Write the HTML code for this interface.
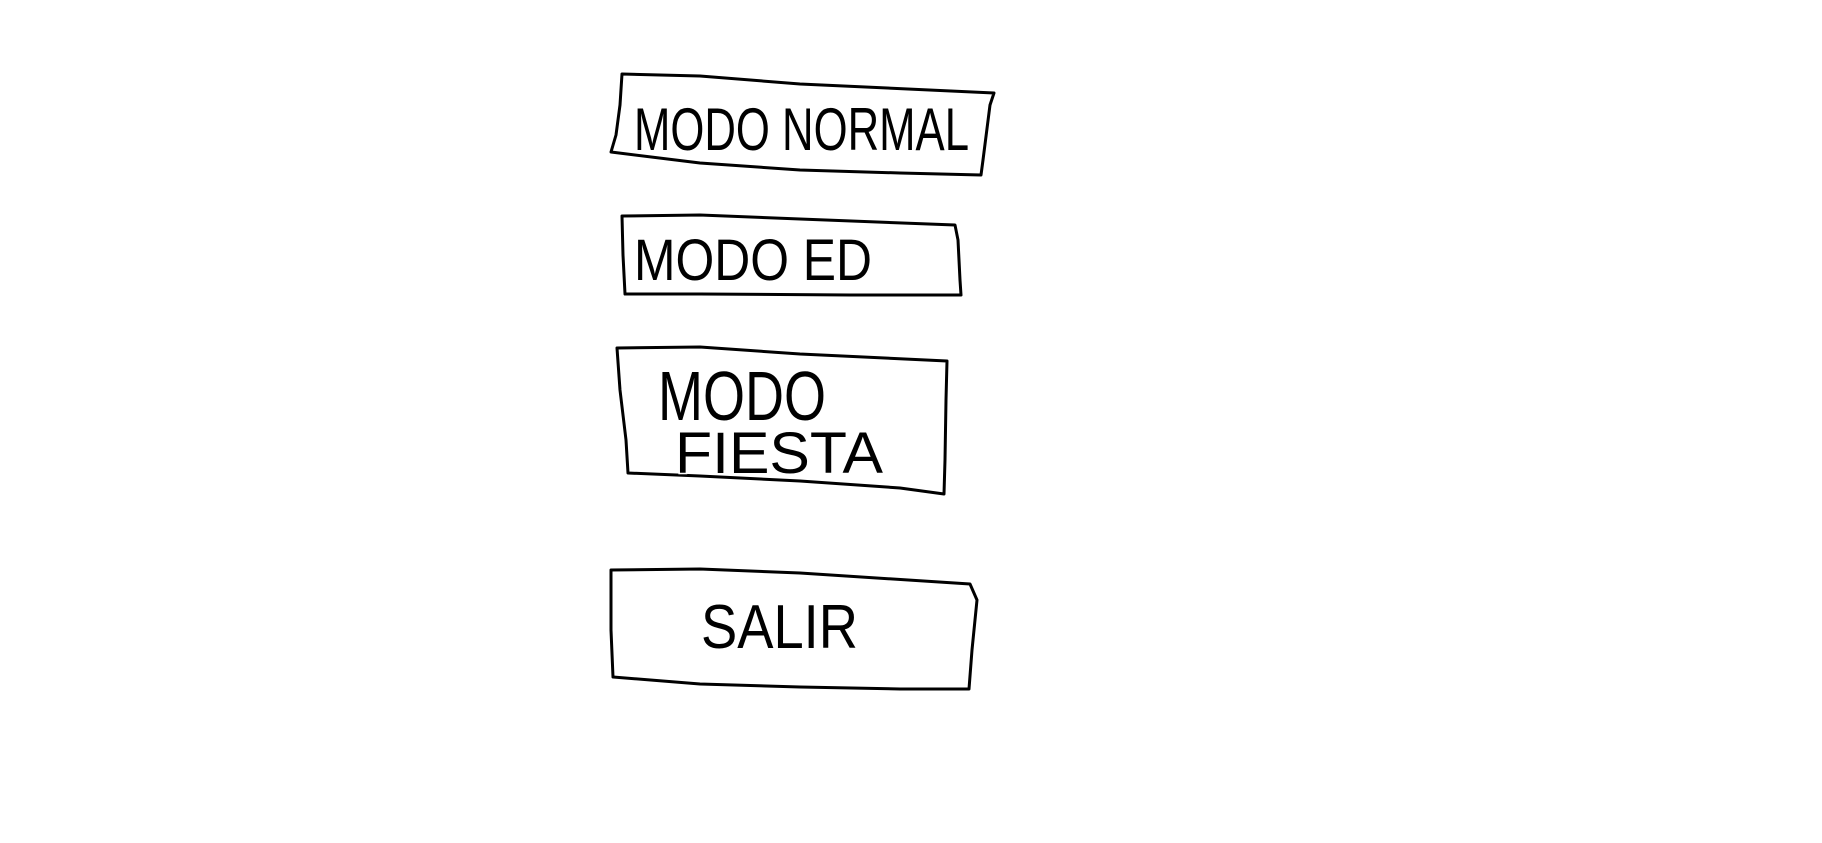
<!DOCTYPE html>
<html><head><style>html,body{margin:0;padding:0;background:#fff;width:1822px;height:843px;overflow:hidden}</style></head>
<body>
<svg width="1822" height="843" xmlns="http://www.w3.org/2000/svg" style="display:block">
<g fill="none" stroke="#000" stroke-width="3" stroke-linejoin="round">
<path d="M622,74 L700,76 L800,84 L994,93 L990,105 L983,160 L981,175 L900,173 L800,170 L700,163 L611,152 L616,135 L620,105 Z"/>
<path d="M622,216 L700,215 L800,219 L955,225 L958,240 L960,280 L961,295 L850,295 L700,294 L625,294 L623,255 Z"/>
<path d="M617,348 L700,347 L800,354 L947,361 L946,400 L945,460 L944,494 L900,488 L800,481 L700,476 L628,473 L626,440 L620,390 Z"/>
<path d="M611,570 L700,569 L800,573 L970,584 L977,600 L972,650 L969,689 L900,689 L800,687 L700,684 L613,677 L611,630 Z"/>
</g>
<g font-family="'Liberation Sans', sans-serif" fill="#000" stroke="#fff" stroke-width="3" paint-order="stroke">
<text x="634" y="150" font-size="60" textLength="335" lengthAdjust="spacingAndGlyphs">MODO NORMAL</text>
<text x="634" y="280" font-size="58" textLength="238" lengthAdjust="spacingAndGlyphs">MODO ED</text>
<text x="658" y="420" font-size="70" textLength="168" lengthAdjust="spacingAndGlyphs">MODO</text>
<text x="675" y="473" font-size="58" textLength="208" lengthAdjust="spacingAndGlyphs">FIESTA</text>
<text x="701" y="648" font-size="62" textLength="157" lengthAdjust="spacingAndGlyphs">SALIR</text>
</g>
</svg>
</body></html>
